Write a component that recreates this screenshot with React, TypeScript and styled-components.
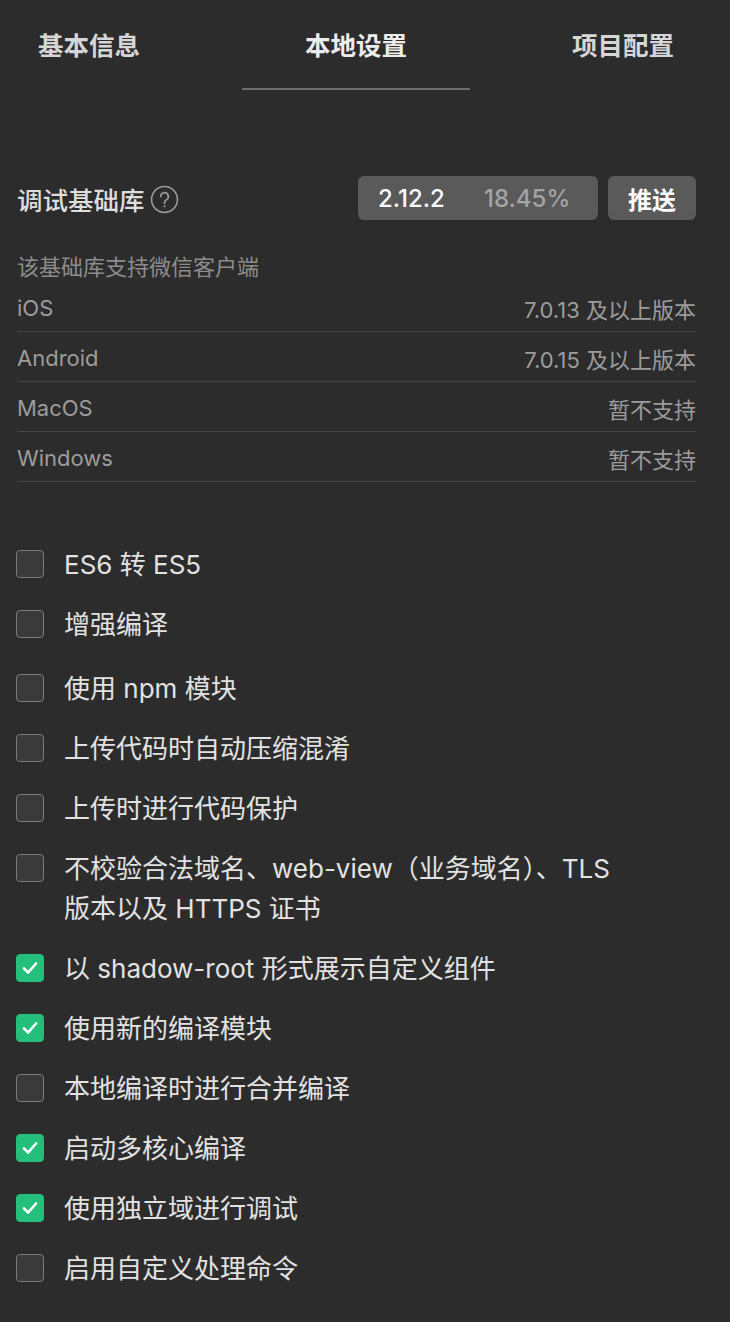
import React from "react"
import styled, { createGlobalStyle } from "styled-components"

const Global = createGlobalStyle`
  html, body {
    margin: 0;
    padding: 0;
    background: #2c2c2c;
  }
  body {
    font-family: Inter, "Noto Sans CJK SC", sans-serif;
    color: #e0e0e0;
  }
`

const Page = styled.div`
  width: 730px;
  min-height: 1322px;
  background: #2c2c2c;
`

const Tabs = styled.div`
  display: flex;
  justify-content: space-between;
  align-items: flex-end;
  padding: 0 56px 0 38px;
`

const Tab = styled.div<{ $active?: boolean }>`
  font-size: 25.5px;
  font-weight: 600;
  line-height: 34px;
  padding: 29px ${(p) => (p.$active ? "63px" : "0")} 25px;
  color: ${(p) => (p.$active ? "#ececec" : "#d6d6d6")};
  border-bottom: 2px solid ${(p) => (p.$active ? "#6e6e6e" : "transparent")};
`

const Content = styled.div`
  padding: 0 34px 0 17px;
`

const LibHeader = styled.div`
  display: flex;
  align-items: center;
  margin-top: 86px;
  height: 44px;
`

const LibTitle = styled.div`
  font-size: 25.5px;
  font-weight: 500;
  color: #dedede;
  flex: 1;
  display: flex;
  align-items: center;
  gap: 5px;
`

const HelpIcon = styled.svg`
  width: 29px;
  height: 29px;
  margin-top: 3px;
`

const VersionBox = styled.div`
  width: 240px;
  height: 44px;
  border-radius: 6px;
  background: #5a5a5a;
  display: flex;
  align-items: center;
  padding-left: 20px;
  box-sizing: border-box;
  font-size: 24px;
  font-weight: 500;
`

const Version = styled.span`
  color: #fafafa;
  width: 106px;
`

const Percent = styled.span`
  color: #a4a4a4;
`

const PushButton = styled.div`
  width: 88px;
  height: 44px;
  margin-left: 10px;
  border-radius: 6px;
  background: #5a5a5a;
  color: #fafafa;
  font-size: 24px;
  font-weight: 600;
  display: flex;
  align-items: center;
  justify-content: center;
`

const Desc = styled.div`
  margin-top: 32px;
  font-size: 22px;
  line-height: 30px;
  color: #8c8c8c;
`

const ClientRow = styled.div`
  display: flex;
  justify-content: space-between;
  align-items: center;
  padding-top: 2px;
  box-sizing: border-box;
  height: 50px;
  border-bottom: 1px solid #444444;
  font-size: 22px;
  color: #9c9c9c;
`

const Options = styled.div`
  margin-top: 63px;
  display: flex;
  flex-direction: column;
  gap: 20px;
`

const Option = styled.label<{ $extra?: number }>`
  display: flex;
  align-items: flex-start;
  gap: 20px;
  margin-top: ${(p) => p.$extra || 0}px;
`

const Box = styled.span<{ $checked?: boolean }>`
  flex: none;
  width: 28px;
  height: 28px;
  margin: 5px 0 0 -1px;
  box-sizing: border-box;
  border-radius: 4px;
  display: flex;
  align-items: center;
  justify-content: center;
  background: ${(p) => (p.$checked ? "#24c07b" : "#3a3a3a")};
  border: 1px solid ${(p) => (p.$checked ? "#24c07b" : "#7c7c7c")};
`

const OptionText = styled.span`
  font-size: 26px;
  line-height: 40px;
  color: #e2e2e2;
  max-width: 570px;
`

const clients = [
  ["iOS", "7.0.13 及以上版本"],
  ["Android", "7.0.15 及以上版本"],
  ["MacOS", "暂不支持"],
  ["Windows", "暂不支持"],
]

const options: { label: string; checked?: boolean; extra?: number }[] = [
  { label: "ES6 转 ES5" },
  { label: "增强编译" },
  { label: "使用 npm 模块", extra: 4 },
  { label: "上传代码时自动压缩混淆" },
  { label: "上传时进行代码保护" },
  { label: "不校验合法域名、web-view（业务域名）、TLS 版本以及 HTTPS 证书" },
  { label: "以 shadow-root 形式展示自定义组件", checked: true },
  { label: "使用新的编译模块", checked: true },
  { label: "本地编译时进行合并编译" },
  { label: "启动多核心编译", checked: true },
  { label: "使用独立域进行调试", checked: true },
  { label: "启用自定义处理命令" },
]

const Check = () => (
  <svg width="18" height="18" viewBox="0 0 18 18">
    <polyline points="3,9.5 7.2,13.5 15,4.5" fill="none" stroke="#fff" strokeWidth="2.6" strokeLinecap="round" strokeLinejoin="round" />
  </svg>
)

const App = () => (
  <Page>
    <Global />
    <Tabs>
      <Tab>基本信息</Tab>
      <Tab $active>本地设置</Tab>
      <Tab>项目配置</Tab>
    </Tabs>
    <Content>
      <LibHeader>
        <LibTitle>
          调试基础库
          <HelpIcon viewBox="0 0 28 28">
            <circle cx="14" cy="14" r="12.5" fill="none" stroke="#9a9a9a" strokeWidth="1.5" />
            <path d="M10.3 11.2a3.7 3.7 0 1 1 5.6 3.1c-1.2.8-1.9 1.4-1.9 2.9v.6" fill="none" stroke="#9a9a9a" strokeWidth="1.6" strokeLinecap="round" />
            <circle cx="14" cy="20.6" r="1" fill="#9a9a9a" />
          </HelpIcon>
        </LibTitle>
        <VersionBox>
          <Version>2.12.2</Version>
          <Percent>18.45%</Percent>
        </VersionBox>
        <PushButton>推送</PushButton>
      </LibHeader>
      <Desc>该基础库支持微信客户端</Desc>
      {clients.map(([name, value]) => (
        <ClientRow key={name}>
          <span>{name}</span>
          <span>{value}</span>
        </ClientRow>
      ))}
      <Options>
        {options.map((o) => (
          <Option key={o.label} $extra={o.extra}>
            <Box $checked={o.checked}>{o.checked && <Check />}</Box>
            <OptionText>{o.label}</OptionText>
          </Option>
        ))}
      </Options>
    </Content>
  </Page>
)

export default App
